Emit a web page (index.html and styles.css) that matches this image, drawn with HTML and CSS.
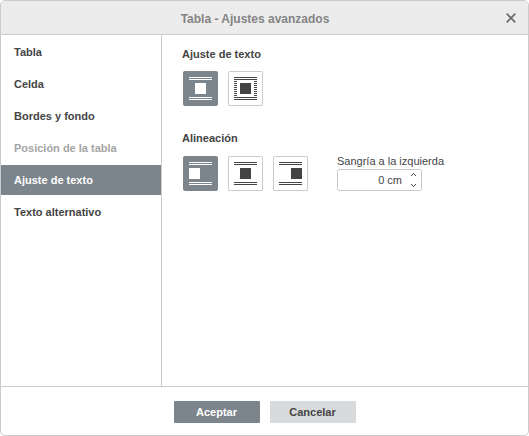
FILE: index.html
```html
<!DOCTYPE html>
<html lang="es">
<head>
<meta charset="utf-8">
<title>Tabla - Ajustes avanzados</title>
<link rel="stylesheet" href="styles.css">
</head>
<body>
<div class="dialog">
  <header class="header">
    <h1 class="title">Tabla - Ajustes avanzados</h1>
    <svg class="close" width="10" height="10" viewBox="0 0 10 10"><path d="M.7 .7L9.3 9.3M9.3 .7L.7 9.3"/></svg>
  </header>
  <div class="body">
    <nav class="menu">
      <div class="item">Tabla</div>
      <div class="item">Celda</div>
      <div class="item">Bordes y fondo</div>
      <div class="item disabled">Posición de la tabla</div>
      <div class="item active">Ajuste de texto</div>
      <div class="item">Texto alternativo</div>
    </nav>
    <main class="content">
      <h2 class="label">Ajuste de texto</h2>
      <div class="row">
        <div class="tile on"><svg width="35" height="35"><path d="M6 6h23v1h-23zM6 8h23v1h-23zM12 12h11v11h-11zM6 26h23v1h-23zM6 28h23v1h-23z"/></svg></div>
        <div class="tile"><svg width="35" height="35"><path d="M6 6h23v1h-23zM6 8h23v1h-23zM12 12h11v11h-11zM6 26h23v1h-23zM6 28h23v1h-23z"/><path class="dots" d="M7.5 10v15M27.5 10v15"/></svg></div>
      </div>
      <h2 class="label second">Alineación</h2>
      <div class="row">
        <div class="tile on"><svg width="35" height="35"><path d="M6 6h23v1h-23zM6 8h23v1h-23zM6 12h11v11h-11zM6 26h23v1h-23zM6 28h23v1h-23z"/></svg></div>
        <div class="tile"><svg width="35" height="35"><path d="M6 6h23v1h-23zM6 8h23v1h-23zM12 12h11v11h-11zM6 26h23v1h-23zM6 28h23v1h-23z"/></svg></div>
        <div class="tile"><svg width="35" height="35"><path d="M6 6h23v1h-23zM6 8h23v1h-23zM18 12h11v11h-11zM6 26h23v1h-23zM6 28h23v1h-23z"/></svg></div>
        <div class="field">
          <span class="caption">Sangría a la izquierda</span>
          <div class="spinner">
            <span class="value">0 cm</span>
            <svg class="arrows" width="5" height="14" viewBox="0 0 5 14"><path d="M0 2h1v1h-1zM1 1h1v1h-1zM2 0h1v1h-1zM3 1h1v1h-1zM4 2h1v1h-1zM0 11h1v1h-1zM1 12h1v1h-1zM2 13h1v1h-1zM3 12h1v1h-1zM4 11h1v1h-1z"/></svg>
          </div>
        </div>
      </div>
    </main>
  </div>
  <footer class="footer">
    <button class="btn primary">Aceptar</button>
    <button class="btn">Cancelar</button>
  </footer>
</div>
</body>
</html>
```

FILE: styles.css
```css
* { box-sizing: border-box; }
body {
  margin: 0;
  background: #fff;
  color: #444;
  font: 11px/14px "Liberation Sans", Arial, sans-serif;
}
.dialog {
  display: flex;
  flex-direction: column;
  width: 529px;
  height: 436px;
  border: 1px solid #cbcbcb;
  border-radius: 5px;
  overflow: hidden;
}
.header {
  display: flex;
  align-items: center;
  height: 34px;
  padding: 0 12px 0 3px;
  background: #ececec;
  border-bottom: 1px solid #cbcbcb;
}
.title {
  flex: 1;
  margin: 2px 0 0;
  text-align: center;
  font-size: 12px;
  font-weight: bold;
  color: #848484;
}
.close { stroke: #6a6a6a; stroke-width: 1.7; fill: none; }
.body { display: flex; flex: 1; }
.menu {
  width: 161px;
  border-right: 1px solid #cbcbcb;
  padding-top: 2px;
}
.item {
  height: 30px;
  margin-bottom: 2px;
  padding-left: 13px;
  line-height: 30px;
  font-weight: bold;
}
.disabled { color: #a5a5a5; }
.active { background: #7d858c; color: #fff; }
.content { flex: 1; padding: 12px 0 0 20px; }
.label { margin: 0; height: 24px; font-size: 11px; font-weight: bold; }
.second { height: 25px; margin-top: 25px; }
.row { display: flex; gap: 10px; padding-left: 1px; height: 35px; }
.tile {
  width: 35px;
  height: 35px;
  border-radius: 2px;
  background: #fff;
  box-shadow: inset 0 0 0 1px #cbcbcb;
  fill: #444;
}
.tile svg { display: block; }
.on { background: #7d858c; box-shadow: none; fill: #fff; }
.dots { stroke: #444; stroke-width: 3; stroke-dasharray: 1 1; }
.field { margin: -2px 0 0 19px; }
.caption { display: block; height: 15px; white-space: nowrap; }
.spinner {
  display: flex;
  align-items: center;
  justify-content: flex-end;
  gap: 9px;
  width: 85px;
  height: 22px;
  padding-right: 5px;
  border: 1px solid #cbcbcb;
  border-radius: 2px;
}
.arrows { fill: #444; }
.footer {
  display: flex;
  justify-content: center;
  gap: 10px;
  height: 49px;
  padding-top: 14px;
  border-top: 1px solid #cbcbcb;
}
.btn {
  width: 86px;
  height: 22px;
  padding: 0;
  border: 0;
  border-radius: 1px;
  background: #d8dadc;
  color: #444;
  font: bold 11px/22px "Liberation Sans", Arial, sans-serif;
}
.primary { background: #7d858c; color: #fff; }
```
